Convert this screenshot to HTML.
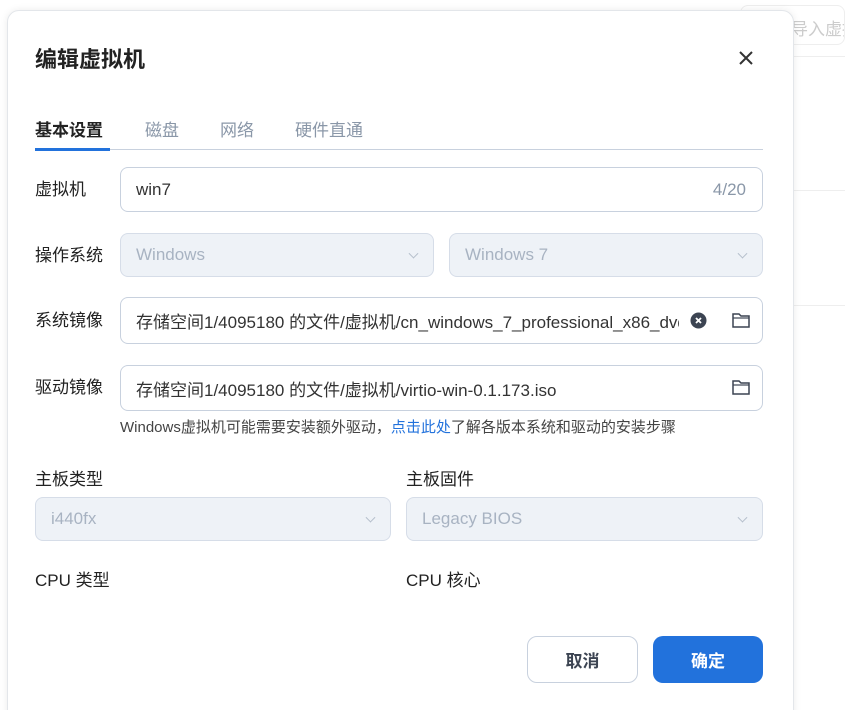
<!DOCTYPE html>
<html><head><meta charset="utf-8"><style>
html,body{margin:0;width:845px;height:710px;overflow:hidden}
body{background:#fff;font-family:"Liberation Sans","Noto Sans CJK SC",sans-serif;position:relative}
.a{position:absolute}
.modal{left:7px;top:10px;width:785px;height:720px;background:#fff;border:1px solid #e3e6ea;border-radius:12px;box-shadow:0 0 8px rgba(0,0,0,.08)}
.lbl{font-size:17px;color:#222}
.inp{border:1px solid #c8d1de;border-radius:8px;background:#fff;box-sizing:border-box;font-size:17px;color:#333;padding-left:15px;display:flex;align-items:center;white-space:nowrap;overflow:hidden}
.dis{background:#eef2f7;border-color:#d6dde8;color:#a8b3c2}
.chev{position:absolute;right:16px;top:50%;width:6px;height:6px;border-right:1px solid #b5bfcc;border-bottom:1px solid #b5bfcc;transform:translateY(-70%) rotate(45deg)}
</style></head><body>
<div class="a" style="left:740px;top:5px;width:105px;height:40px;border:1px solid #eee;border-radius:8px;font-size:17px;color:#ccc;padding:9px 0 0 50px;box-sizing:border-box;white-space:nowrap;overflow:hidden">导入虚拟</div>
<div class="a" style="left:793px;top:56px;width:52px;height:1px;background:#eee"></div>
<div class="a" style="left:793px;top:190px;width:52px;height:1px;background:#eee"></div>
<div class="a" style="left:793px;top:305px;width:52px;height:1px;background:#eee"></div>
<div class="a modal"></div>
<div class="a" style="left:35px;top:42px;font-size:22px;font-weight:bold;color:#222">编辑虚拟机</div>
<svg class="a" style="left:739px;top:51px" width="14" height="14"><path d="M1 1L13 13M13 1L1 13" stroke="#333" stroke-width="2"/></svg>
<div class="a" style="left:35px;top:116px;font-size:17px;font-weight:bold;color:#222">基本设置</div>
<div class="a" style="left:145px;top:116px;font-size:17px;color:#8a97a8">磁盘</div>
<div class="a" style="left:220px;top:116px;font-size:17px;color:#8a97a8">网络</div>
<div class="a" style="left:295px;top:116px;font-size:17px;color:#8a97a8">硬件直通</div>
<div class="a" style="left:35px;top:149px;width:728px;height:1px;background:#c8d1de"></div>
<div class="a" style="left:35px;top:148px;width:75px;height:3px;background:#2272dc"></div>

<div class="a lbl" style="left:35px;top:175px">虚拟机</div>
<div class="a inp" style="left:120px;top:167px;width:643px;height:45px">win7<span style="position:absolute;right:16px;color:#8a97a8">4/20</span></div>

<div class="a lbl" style="left:35px;top:241px">操作系统</div>
<div class="a inp dis" style="left:120px;top:233px;width:314px;height:44px">Windows<i class="chev"></i></div>
<div class="a inp dis" style="left:449px;top:233px;width:314px;height:44px">Windows 7<i class="chev"></i></div>

<div class="a lbl" style="left:35px;top:306px">系统镜像</div>
<div class="a inp" style="left:120px;top:297px;width:643px;height:47px"><span style="display:inline-block;width:543px;overflow:hidden">存储空间1/4095180 的文件/虚拟机/cn_windows_7_professional_x86_dvd</span></div>
<svg class="a" style="left:690px;top:312px" width="17" height="17"><circle cx="8.5" cy="8.5" r="8" fill="#3c4452"/><path d="M6 6L11 11M11 6L6 11" stroke="#fff" stroke-width="1.8"/></svg>
<svg class="a" style="left:732px;top:312px" width="18" height="16"><path d="M1 2H7L9 4H17V15H1Z" fill="none" stroke="#3c4452" stroke-width="1.5"/><path d="M1 6H17" stroke="#3c4452" stroke-width="1.2"/></svg>

<div class="a lbl" style="left:35px;top:373px">驱动镜像</div>
<div class="a inp" style="left:120px;top:365px;width:643px;height:46px">存储空间1/4095180 的文件/虚拟机/virtio-win-0.1.173.iso</div>
<svg class="a" style="left:732px;top:379px" width="18" height="16"><path d="M1 2H7L9 4H17V15H1Z" fill="none" stroke="#3c4452" stroke-width="1.5"/><path d="M1 6H17" stroke="#3c4452" stroke-width="1.2"/></svg>
<div class="a" style="left:120px;top:416px;font-size:15px;color:#444;white-space:nowrap">Windows虚拟机可能需要安装额外驱动，<span style="color:#2272dc">点击此处</span>了解各版本系统和驱动的安装步骤</div>

<div class="a lbl" style="left:35px;top:465px">主板类型</div>
<div class="a lbl" style="left:406px;top:465px">主板固件</div>
<div class="a inp dis" style="left:35px;top:497px;width:356px;height:44px">i440fx<i class="chev"></i></div>
<div class="a inp dis" style="left:406px;top:497px;width:357px;height:44px">Legacy BIOS<i class="chev"></i></div>

<div class="a lbl" style="left:35px;top:566px">CPU 类型</div>
<div class="a lbl" style="left:406px;top:566px">CPU 核心</div>

<div class="a" style="left:527px;top:636px;width:111px;height:47px;border:1px solid #c8d1de;border-radius:10px;box-sizing:border-box;display:flex;align-items:center;justify-content:center;font-size:17px;font-weight:bold;color:#3c4452">取消</div>
<div class="a" style="left:653px;top:636px;width:110px;height:47px;background:#2272dc;border-radius:10px;display:flex;align-items:center;justify-content:center;font-size:17px;font-weight:bold;color:#fff">确定</div>
</body></html>
